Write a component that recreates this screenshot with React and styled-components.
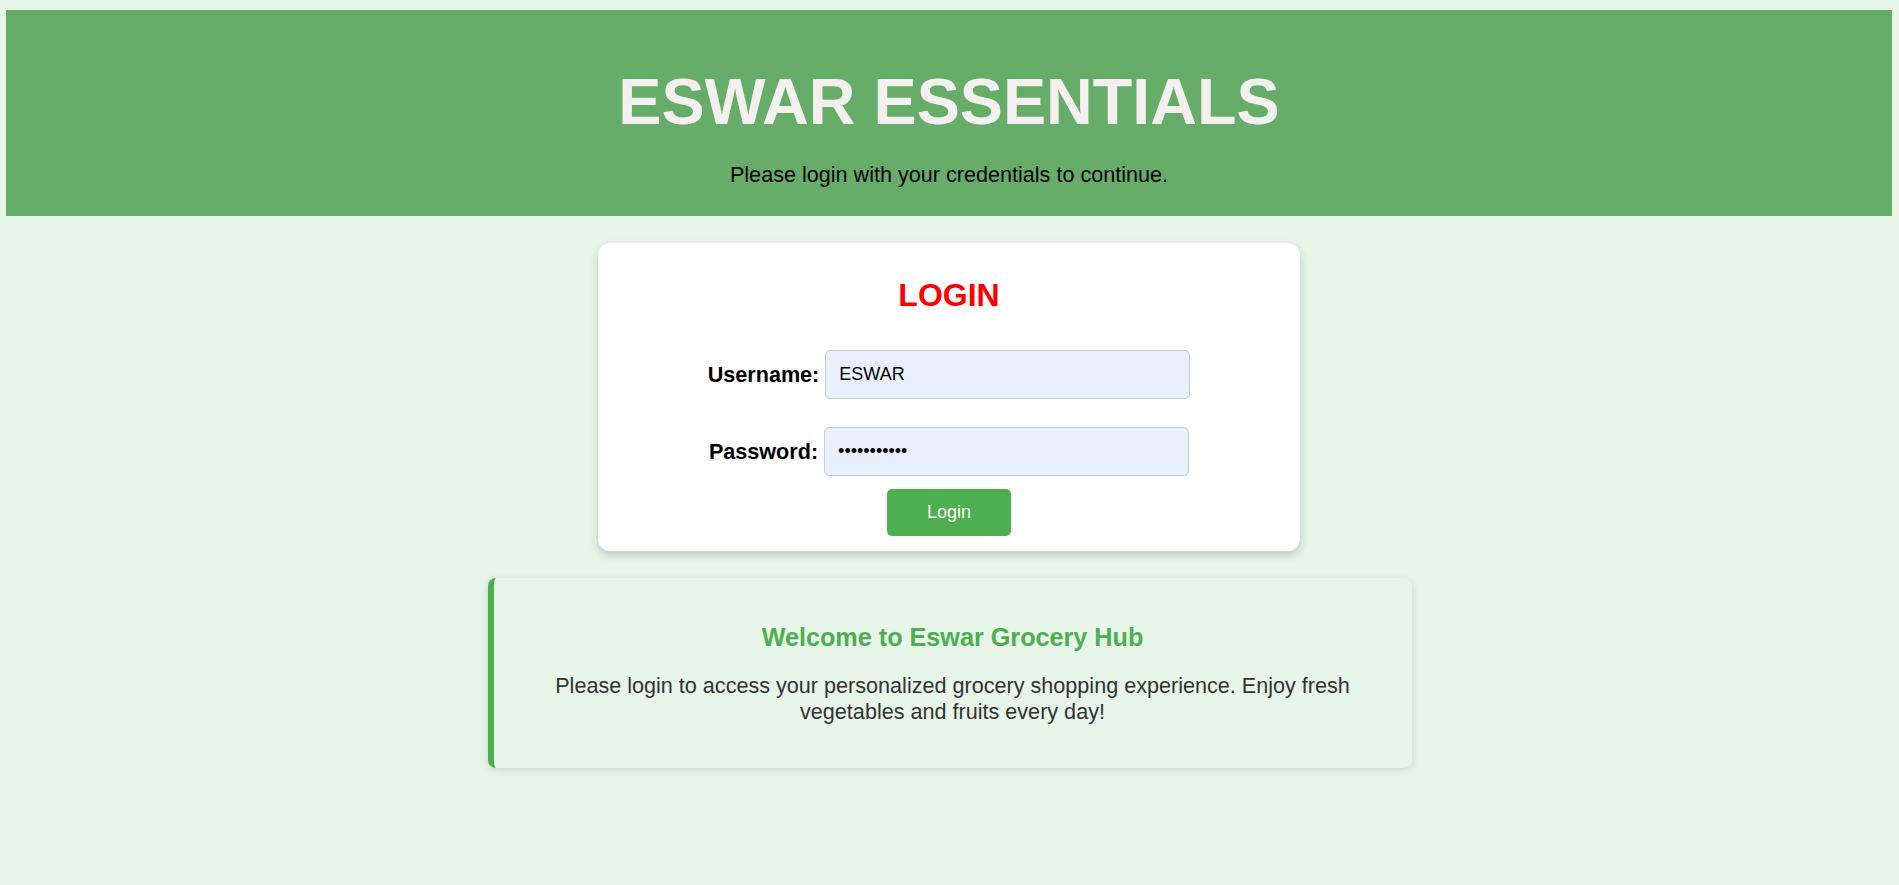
import React from 'react';
import styled, { createGlobalStyle } from 'styled-components';

const GlobalStyle = createGlobalStyle`
  html, body {
    margin: 0;
    padding: 0;
    min-height: 100%;
    background: #e8f5e9;
    font-family: "Liberation Sans", Arial, sans-serif;
  }
  * {
    box-sizing: border-box;
  }
`;

const Page = styled.div`
  display: flex;
  flex-direction: column;
  align-items: center;
  padding-top: 10px;
  min-height: 885px;
`;

const Header = styled.header`
  align-self: stretch;
  margin: 0 7px 0 6px;
  padding: 55px 20px 29px;
  background: #66ad6a;
  text-align: center;
`;

const Title = styled.h1`
  margin: 0 0 23px;
  font-size: 64.7px;
  line-height: 74px;
  font-weight: 700;
  color: #f4f0ef;
`;

const Subtitle = styled.p`
  margin: 0;
  font-size: 21.6px;
  line-height: 25px;
  color: #000;
`;

const Card = styled.div`
  width: 702px;
  margin-top: 27px;
  margin-right: 1px;
  padding: 34px 20px 15px;
  background: #fff;
  border-radius: 12px;
  box-shadow: 0 4px 10px rgba(0, 0, 0, 0.18);
  display: flex;
  flex-direction: column;
  align-items: center;
`;

const CardTitle = styled.h2`
  margin: 0 0 37px;
  font-size: 32px;
  line-height: 36px;
  font-weight: 700;
  color: #ff0000;
`;

const Row = styled.div`
  display: flex;
  align-items: center;
  gap: 6px;
  margin-bottom: ${p => (p.$last ? '13px' : '28px')};
`;

const Label = styled.label`
  font-size: 21.6px;
  font-weight: 700;
  color: #000;
`;

const Input = styled.input`
  width: 365px;
  height: 49px;
  padding: 0 13px;
  border: 1px solid #c8cbd2;
  border-radius: 5px;
  background: #e8f0fe;
  font-family: "Liberation Sans", Arial, sans-serif;
  font-size: 18px;
  color: #000;
  outline: none;
`;

const Button = styled.button`
  width: 124px;
  height: 47px;
  border: none;
  border-radius: 5px;
  background: #4caf50;
  color: #fff;
  font-family: "Liberation Sans", Arial, sans-serif;
  font-size: 18px;
  cursor: pointer;
`;

const Welcome = styled.section`
  width: 924px;
  margin-top: 27px;
  padding: 45px 30px 43px;
  background: #e8f5e9;
  border-left: 6px solid #4caf50;
  border-radius: 8px;
  box-shadow: 0 2px 8px rgba(0, 0, 0, 0.12);
  text-align: center;
`;

const WelcomeTitle = styled.h3`
  margin: 0 0 21px;
  font-size: 25.2px;
  line-height: 29px;
  font-weight: 700;
  color: #4caf50;
`;

const WelcomeText = styled.p`
  margin: 0;
  font-size: 21.6px;
  line-height: 26px;
  color: #333;
`;

const App = () => (
  <>
    <GlobalStyle />
    <Page>
      <Header>
        <Title>ESWAR ESSENTIALS</Title>
        <Subtitle>Please login with your credentials to continue.</Subtitle>
      </Header>

      <Card>
        <CardTitle>LOGIN</CardTitle>
        <Row>
          <Label htmlFor="username">Username:</Label>
          <Input id="username" type="text" defaultValue="ESWAR" />
        </Row>
        <Row $last>
          <Label htmlFor="password">Password:</Label>
          <Input id="password" type="password" defaultValue="eswar@12345" />
        </Row>
        <Button type="button">Login</Button>
      </Card>

      <Welcome>
        <WelcomeTitle>Welcome to Eswar Grocery Hub</WelcomeTitle>
        <WelcomeText>
          Please login to access your personalized grocery shopping experience. Enjoy fresh
          vegetables and fruits every day!
        </WelcomeText>
      </Welcome>
    </Page>
  </>
);

export default App;
